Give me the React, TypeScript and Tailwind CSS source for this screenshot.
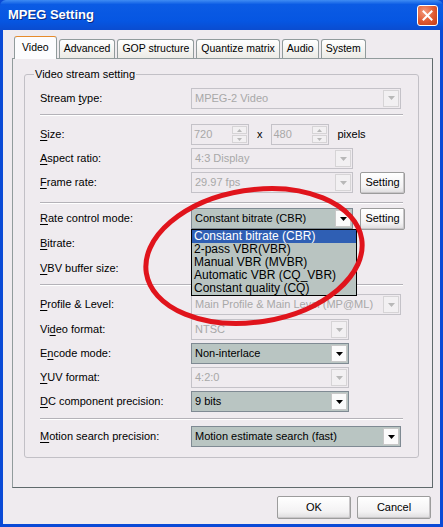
import React from 'react';

const font = "font-['Liberation_Sans',Arial,sans-serif]";

function U({ children }: { children: React.ReactNode }) {
  return <span className="underline underline-offset-2">{children}</span>;
}

function Arrow({ disabled }: { disabled?: boolean }) {
  return (
    <div
      className={`m-[1px] flex w-[16px] items-center justify-center border ${
        disabled ? 'border-[#d6d4d6] bg-[#f2f0f2]' : 'border-[#c8c8c8] bg-[#fbfbfb]'
      }`}
    >
      <svg width="7" height="4" viewBox="0 0 7 4">
        <path d="M0 0h7L3.5 4z" fill={disabled ? '#b8b8b8' : '#000'} />
      </svg>
    </div>
  );
}

function Combo({
  value,
  width,
  disabled,
  children,
}: {
  value: string;
  width: string;
  disabled?: boolean;
  children?: React.ReactNode;
}) {
  return (
    <div
      className={`relative flex h-[21px] ${width} border ${
        disabled ? 'border-[#c4c2c8] bg-[#efebef] text-[#a8a8a8]' : 'border-[#7f8a93] bg-[#b9c5c2] text-black'
      }`}
    >
      <span className="flex-1 overflow-hidden whitespace-nowrap pl-[3px] leading-[19px]">{value}</span>
      <Arrow disabled={disabled} />
      {children}
    </div>
  );
}

function Spin({ value }: { value: string }) {
  return (
    <div className="flex h-[21px] w-[58px] border border-[#c4c2c8] bg-[#efebef] text-[#a8a8a8]">
      <span className="flex-1 pl-[2px] leading-[19px]">{value}</span>
      <div className="m-[1px] flex w-[15px] flex-col gap-[1px]">
        {[0, 1].map((i) => (
          <div key={i} className="flex flex-1 items-center justify-center border border-[#d6d4d6] bg-[#f2f0f2]">
            <svg width="5" height="3" viewBox="0 0 5 3">
              <path d={i === 0 ? 'M0 3h5L2.5 0z' : 'M0 0h5L2.5 3z'} fill="#b8b8b8" />
            </svg>
          </div>
        ))}
      </div>
    </div>
  );
}

function Btn({ label, w, h }: { label: string; w: string; h: string }) {
  return (
    <div
      className={`flex ${w} ${h} items-center justify-center rounded-[2px] border border-[#9c9c9c] bg-[linear-gradient(to_bottom,#ffffff,#f3f2f3_70%,#dedcde)] shadow-[inset_-1px_-1px_0_#c8c6c8]`}
    >
      {label}
    </div>
  );
}

function Row({ label, children, className = '' }: { label: React.ReactNode; children?: React.ReactNode; className?: string }) {
  return (
    <div className={`flex h-[21px] items-center ${className}`}>
      <div className="w-[151px] shrink-0">{label}</div>
      {children}
    </div>
  );
}

function Sep({ className = '' }: { className?: string }) {
  return <div className={`w-[363px] border-t border-b border-t-[#b4b2b8] border-b-white ${className}`} />;
}

const tabs = ['Video', 'Advanced', 'GOP structure', 'Quantize matrix', 'Audio', 'System'];
const rateItems = ['Constant bitrate (CBR)', '2-pass VBR(VBR)', 'Manual VBR (MVBR)', 'Automatic VBR (CQ_VBR)', 'Constant quality (CQ)'];

export default function App() {
  return (
    <div className={`relative h-[527px] w-[443px] overflow-hidden bg-[#0a4ad6] text-[11px] text-black ${font}`}>
      {/* title bar */}
      <div className="flex h-[30px] items-center justify-between rounded-t-[6px] bg-[linear-gradient(to_bottom,#3f8cf3,#0b5be4_15%,#0656e2_70%,#0a4cd0)] pl-[8px] pr-[5px]">
        <span className="text-[13px] font-bold text-white [text-shadow:1px_1px_0_#0a2a80]">MPEG Setting</span>
        <div className="flex h-[21px] w-[21px] items-center justify-center rounded-[3px] border border-white bg-[radial-gradient(circle_at_35%_30%,#f39a7c,#e0582f_55%,#c13c18)]">
          <svg width="11" height="11" viewBox="0 0 11 11">
            <path d="M1.5 1.5l8 8M9.5 1.5l-8 8" stroke="#fff" strokeWidth="2" strokeLinecap="square" />
          </svg>
        </div>
      </div>

      {/* client */}
      <div className="mx-[3px] h-[494px] bg-[#efebef] pt-[6px]">
        {/* tabs */}
        <div className="ml-[11px] flex h-[22px] items-end text-[10.5px]">
          {tabs.map((t, i) => (
            <div
              key={t}
              className={`flex items-center border border-b-0 border-[#919b9c] ${
                i === 0
                  ? 'relative z-10 -mb-[1px] h-[23px] rounded-t-[3px] border-t-[#e68b2c] bg-[#fcfcfe] px-[7px]'
                  : 'ml-[2px] h-[19px] rounded-t-[3px] bg-[linear-gradient(to_bottom,#ffffff,#ecebe6)] px-[4px]'
              }`}
            >
              {t}
            </div>
          ))}
        </div>
        {/* tab panel */}
        <div className="ml-[9px] h-[430px] w-[421px] border border-[#919b9c] border-r-[#5f6a6c] border-b-[#5f6a6c] bg-[#efebef] pl-[11px] pt-[9px]">
          <fieldset className="h-[390px] w-[395px] rounded-[3px] border border-[#c2c0c6] pl-[15px]">
            <legend className="-ml-[6px] px-[1px] leading-[13px]">Video stream setting</legend>
            <Row label={<>Stream <U>t</U>ype:</>} className="mt-[6px] h-[22px]">
              <Combo value="MPEG-2 Video" width="w-[210px]" disabled />
            </Row>
            <Sep className="mt-[5px]" />
            <Row label={<><U>S</U>ize:</>} className="mt-[8px]">
              <Spin value="720" />
              <span className="ml-[8px] mr-[8px]">x</span>
              <Spin value="480" />
              <span className="ml-[9px]">pixels</span>
            </Row>
            <Row label={<><U>A</U>spect ratio:</>} className="mt-[3px]">
              <Combo value="4:3 Display" width="w-[162px]" disabled />
            </Row>
            <Row label={<><U>F</U>rame rate:</>} className="mt-[3px]">
              <Combo value="29.97 fps" width="w-[162px]" disabled />
              <div className="ml-[7px]">
                <Btn label="Setting" w="w-[45px]" h="h-[22px]" />
              </div>
            </Row>
            <Sep className="mt-[9px]" />
            <Row label={<><U>R</U>ate control mode:</>} className="relative z-20 mt-[4px]">
              <Combo value="Constant bitrate (CBR)" width="w-[162px]">
                <div className="absolute left-[-1px] top-[20px] w-[166px] border border-black bg-[#b9c4c1] text-[12px]">
                  {rateItems.map((it, i) => (
                    <div
                      key={it}
                      className={`h-[13px] pl-[2px] leading-[13px] ${i === 0 ? 'bg-[#2f5fb4] text-white' : ''}`}
                    >
                      {it}
                    </div>
                  ))}
                </div>
              </Combo>
              <div className="ml-[7px]">
                <Btn label="Setting" w="w-[45px]" h="h-[22px]" />
              </div>
            </Row>
            <Row label={<><U>B</U>itrate:</>} className="mt-[4px]" />
            <Row label={<><U>V</U>BV buffer size:</>} className="mt-[4px]" />
            <Sep className="mt-[5px]" />
            <Row label={<><U>P</U>rofile &amp; Level:</>} className="mt-[8px]">
              <Combo value="Main Profile & Main Level (MP@ML)" width="w-[210px]" disabled />
            </Row>
            <Row label={<>Vi<U>d</U>eo format:</>} className="mt-[4px]">
              <Combo value="NTSC" width="w-[158px]" disabled />
            </Row>
            <Row label={<>E<U>n</U>code mode:</>} className="mt-[3px]">
              <Combo value="Non-interlace" width="w-[158px]" />
            </Row>
            <Row label={<><U>Y</U>UV format:</>} className="mt-[3px]">
              <Combo value="4:2:0" width="w-[158px]" disabled />
            </Row>
            <Row label={<><U>D</U>C component precision:</>} className="mt-[3px]">
              <Combo value="9 bits" width="w-[158px]" />
            </Row>
            <Sep className="mt-[6px]" />
            <Row label={<><U>M</U>otion search precision:</>} className="mt-[6px]">
              <Combo value="Motion estimate search (fast)" width="w-[210px]" />
            </Row>
          </fieldset>
        </div>
        {/* buttons */}
        <div className="mr-[9px] mt-[8px] flex justify-end gap-[6px]">
          <Btn label="OK" w="w-[74px]" h="h-[23px]" />
          <Btn label="Cancel" w="w-[74px]" h="h-[23px]" />
        </div>
      </div>

      {/* red hand-drawn ellipse */}
      <svg className="pointer-events-none absolute left-0 top-0 z-30" width="443" height="527" viewBox="0 0 443 527">
        <ellipse cx="254" cy="256" rx="109" ry="66" transform="rotate(-9 254 256)" fill="none" stroke="#e0141c" strokeWidth="5" />
      </svg>
    </div>
  );
}
